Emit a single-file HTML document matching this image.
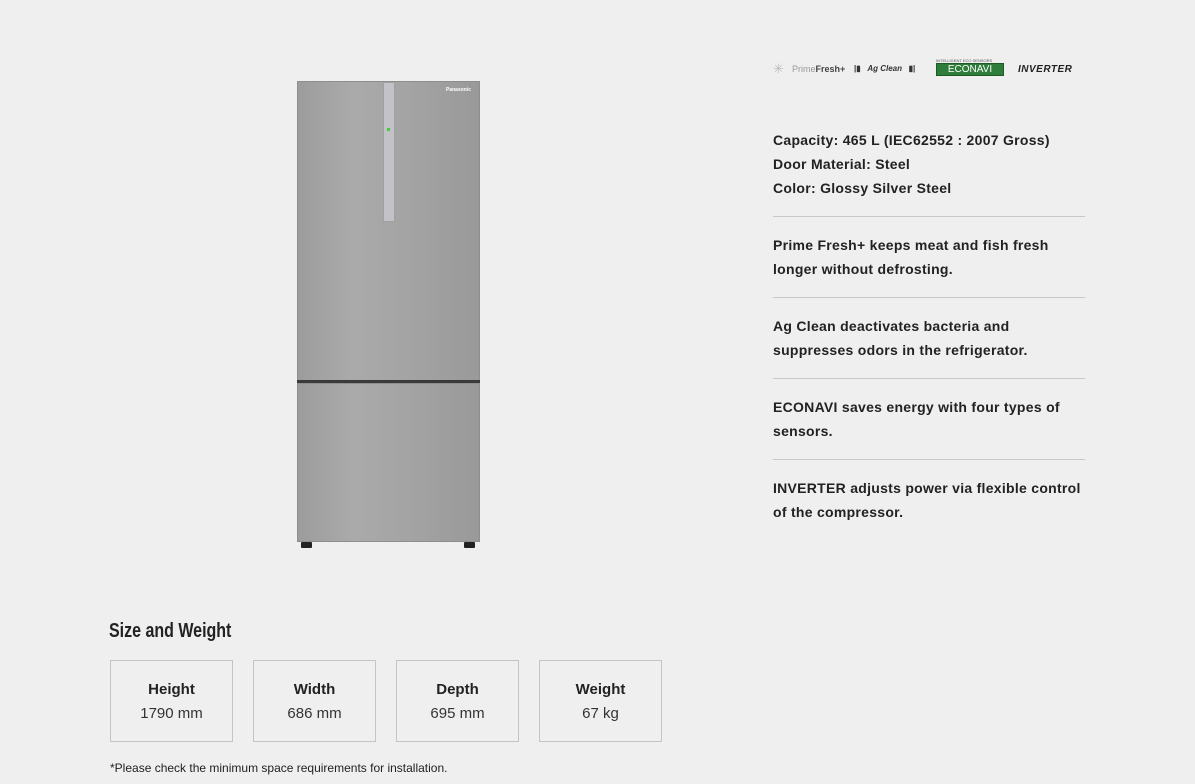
<!DOCTYPE html>
<html><head><meta charset="utf-8"><style>
*{margin:0;padding:0;box-sizing:border-box}
body{width:1195px;height:784px;background:#efefef;font-family:"Liberation Sans",sans-serif;color:#222;position:relative;overflow:hidden}
.a{position:absolute}
.fr{left:297px;width:183px;background:linear-gradient(90deg,#9c9c9c,#aaaaaa 30%,#a4a4a4 60%,#999);border:1px solid #8e8e8e}
.spec{left:773px;font-size:14px;font-weight:bold;line-height:24px;color:#222;width:330px;letter-spacing:0.28px}
.hr{left:773px;width:312px;height:1px;background:#c8c8c8}
.box{top:660px;width:123px;height:82px;border:1px solid #c4c4c4;text-align:center;font-size:15px}
.box b{display:block;margin-top:20px;line-height:18px}
.box span{display:block;margin-top:6px;line-height:18px;color:#333}
</style></head><body>
<div class="a fr" style="top:81px;height:300px"></div>
<div class="a" style="left:297px;top:380px;width:183px;height:3px;background:#3a3a3a"></div>
<div class="a fr" style="top:383px;height:159px"></div>
<div class="a" style="left:383px;top:82px;width:12px;height:140px;background:#c2c2c8;border:1px solid #a0a0a0"></div>
<div class="a" style="left:387px;top:128px;width:3px;height:3px;background:#4c4"></div>
<div class="a" style="left:446px;top:87px;font-size:5px;color:#fff;font-weight:bold">Panasonic</div>
<div class="a" style="left:301px;top:542px;width:11px;height:6px;background:#222;border-radius:1px"></div>
<div class="a" style="left:464px;top:542px;width:11px;height:6px;background:#222;border-radius:1px"></div>
<div class="a" style="left:773px;top:61px;font-size:13px;color:#bbb">✳</div>
<div class="a" style="left:792px;top:64px;font-size:9px;color:#999">Prime<b style="color:#444">Fresh+</b></div>
<div class="a" style="left:854px;top:64px;font-size:8px;color:#333;font-weight:bold">|▮ &nbsp;&nbsp;<i>Ag Clean</i> &nbsp;&nbsp;▮|</div>
<div class="a" style="left:936px;top:58px;font-size:4px;color:#555">INTELLIGENT ECO SENSORS</div>
<div class="a" style="left:936px;top:63px;width:68px;height:13px;background:#2e7d3a;border:1px solid #1d5a26;color:#fff;font-size:10px;text-align:center;line-height:11px">ECONAVI</div>
<div class="a" style="left:1018px;top:64px;font-size:10px;font-weight:bold;font-style:italic;color:#222;letter-spacing:0.5px">INVERTER</div>
<div class="a spec" style="top:128px">Capacity: 465 L (IEC62552 : 2007 Gross)<br>Door Material: Steel<br>Color: Glossy Silver Steel</div>
<div class="a hr" style="top:216px"></div>
<div class="a spec" style="top:233px">Prime Fresh+ keeps meat and fish fresh<br>longer without defrosting.</div>
<div class="a hr" style="top:297px"></div>
<div class="a spec" style="top:314px">Ag Clean deactivates bacteria and<br>suppresses odors in the refrigerator.</div>
<div class="a hr" style="top:378px"></div>
<div class="a spec" style="top:395px">ECONAVI saves energy with four types of<br>sensors.</div>
<div class="a hr" style="top:459px"></div>
<div class="a spec" style="top:476px">INVERTER adjusts power via flexible control<br>of the compressor.</div>
<div class="a" style="left:109px;top:620px;font-size:20px;font-weight:bold;color:#222;transform:scaleX(0.8);transform-origin:left">Size and Weight</div>
<div class="a box" style="left:110px"><b>Height</b><span>1790 mm</span></div>
<div class="a box" style="left:253px"><b>Width</b><span>686 mm</span></div>
<div class="a box" style="left:396px"><b>Depth</b><span>695 mm</span></div>
<div class="a box" style="left:539px"><b>Weight</b><span>67 kg</span></div>
<div class="a" style="left:110px;top:761px;font-size:12px;color:#222">*Please check the minimum space requirements for installation.</div>
</body></html>
